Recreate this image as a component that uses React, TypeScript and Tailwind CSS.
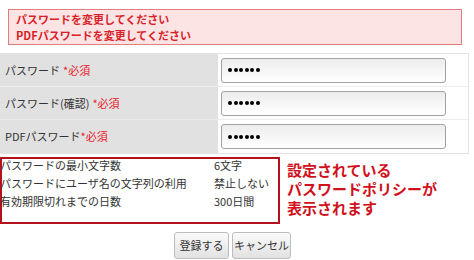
import { ReactNode } from 'react'

const font = { fontFamily: '"Noto Sans CJK JP", "Noto Sans", sans-serif' }

function Req() {
  return <span className="text-[#e8202a]">*必須</span>
}

function Dots() {
  return (
    <div className="flex gap-[1.5px]">
      {[0, 1, 2, 3, 4, 5].map((i) => (
        <span key={i} className="w-[4px] h-[4px] rounded-full bg-black" />
      ))}
    </div>
  )
}

function Row({ label, last }: { label: ReactNode; last?: boolean }) {
  return (
    <div className={`flex h-[33px] ${last ? '' : 'border-b border-[#ececec]'}`}>
      <div className="w-[218px] bg-[#e1e1e1] flex items-center pl-[5px] text-[11px] text-[#333]">
        {label}
      </div>
      <div className="flex-1 flex items-center pl-[3px]">
        <div className="w-[225px] h-[25px] rounded-[3px] border border-[#a2a2a2] bg-gradient-to-b from-[#ececec] to-white flex items-center pl-[6px]">
          <Dots />
        </div>
      </div>
    </div>
  )
}

export default function App() {
  return (
    <div className="w-[474px] h-[260px] bg-white relative overflow-hidden" style={font}>
      <div className="pt-[9px] pl-[8px]">
        <div className="w-[454px] h-[36px] bg-[#fde4e4] border border-[#e57b7b] px-[7px] pt-[1px] text-[11px] font-bold text-[#d81f2a] leading-[16px]">
          <div>パスワードを変更してください</div>
          <div>PDFパスワードを変更してください</div>
        </div>
      </div>

      <div className="mt-[8px] w-[469px] border border-[#e4e4e4] border-l-0">
        <Row label={<>パスワード <span className="ml-[3px]"><Req /></span></>} />
        <Row label={<>パスワード(確認) <span className="ml-[3px]"><Req /></span></>} />
        <Row label={<>PDFパスワード<Req /></>} last />
      </div>

      <div className="flex mt-[3px]">
        <div className="w-[280px] h-[67px] border-2 border-[#b3121c] text-[11px] text-[#333] leading-[18px]">
          <div className="-mt-[3px]">
            <div className="flex"><span className="w-[214px] -ml-[2px]">パスワードの最小文字数</span><span>6文字</span></div>
            <div className="flex"><span className="w-[214px] -ml-[2px]">パスワードにユーザ名の文字列の利用</span><span>禁止しない</span></div>
            <div className="flex"><span className="w-[214px] -ml-[2px]">有効期限切れまでの日数</span><span>300日間</span></div>
          </div>
        </div>
        <div className="pl-[7px] pt-[3px] text-[15px] font-bold text-[#d0111c] leading-[19px]">
          <div>設定されている</div>
          <div>パスワードポリシーが</div>
          <div>表示されます</div>
        </div>
      </div>

      <div className="flex justify-center gap-[3px] mt-[8px] pr-[9px]">
        <button className="h-[27px] w-[55px] rounded-[3px] border border-[#bdbdbd] bg-gradient-to-b from-[#fafafa] to-[#e2e2e2] text-[11px] text-[#333] whitespace-nowrap">
          登録する
        </button>
        <button className="h-[27px] w-[59px] rounded-[3px] border border-[#bdbdbd] bg-gradient-to-b from-[#fafafa] to-[#e2e2e2] text-[11px] text-[#333] whitespace-nowrap">
          キャンセル
        </button>
      </div>
    </div>
  )
}
